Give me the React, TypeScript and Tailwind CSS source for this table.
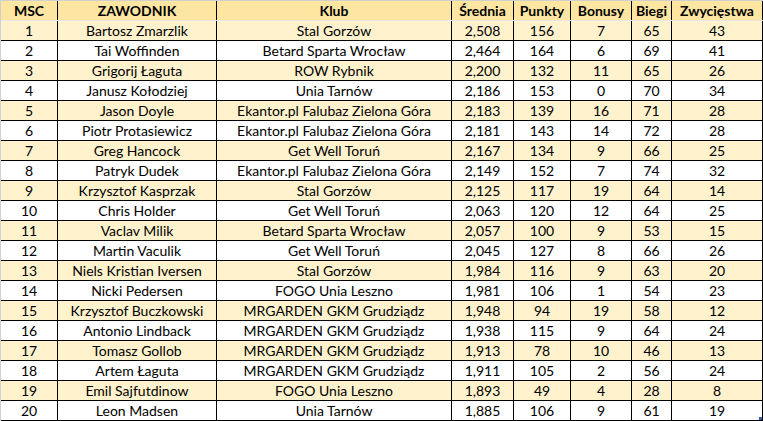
import React from "react";

const rows: (string | number)[][] = [
  [1, "Bartosz Zmarzlik", "Stal Gorzów", "2,508", 156, 7, 65, 43],
  [2, "Tai Woffinden", "Betard Sparta Wrocław", "2,464", 164, 6, 69, 41],
  [3, "Grigorij Łaguta", "ROW Rybnik", "2,200", 132, 11, 65, 26],
  [4, "Janusz Kołodziej", "Unia Tarnów", "2,186", 153, 0, 70, 34],
  [5, "Jason Doyle", "Ekantor.pl Falubaz Zielona Góra", "2,183", 139, 16, 71, 28],
  [6, "Piotr Protasiewicz", "Ekantor.pl Falubaz Zielona Góra", "2,181", 143, 14, 72, 28],
  [7, "Greg Hancock", "Get Well Toruń", "2,167", 134, 9, 66, 25],
  [8, "Patryk Dudek", "Ekantor.pl Falubaz Zielona Góra", "2,149", 152, 7, 74, 32],
  [9, "Krzysztof Kasprzak", "Stal Gorzów", "2,125", 117, 19, 64, 14],
  [10, "Chris Holder", "Get Well Toruń", "2,063", 120, 12, 64, 25],
  [11, "Vaclav Milik", "Betard Sparta Wrocław", "2,057", 100, 9, 53, 15],
  [12, "Martin Vaculik", "Get Well Toruń", "2,045", 127, 8, 66, 26],
  [13, "Niels Kristian Iversen", "Stal Gorzów", "1,984", 116, 9, 63, 20],
  [14, "Nicki Pedersen", "FOGO Unia Leszno", "1,981", 106, 1, 54, 23],
  [15, "Krzysztof Buczkowski", "MRGARDEN GKM Grudziądz", "1,948", 94, 19, 58, 12],
  [16, "Antonio Lindback", "MRGARDEN GKM Grudziądz", "1,938", 115, 9, 64, 24],
  [17, "Tomasz Gollob", "MRGARDEN GKM Grudziądz", "1,913", 78, 10, 46, 13],
  [18, "Artem Łaguta", "MRGARDEN GKM Grudziądz", "1,911", 105, 2, 56, 24],
  [19, "Emil Sajfutdinow", "FOGO Unia Leszno", "1,893", 49, 4, 28, 8],
  [20, "Leon Madsen", "Unia Tarnów", "1,885", 106, 9, 61, 19],
];

const headers = ["MSC", "ZAWODNIK", "Klub", "Średnia", "Punkty", "Bonusy", "Biegi", "Zwycięstwa"];

const cols = "grid grid-cols-[57px_159px_235px_62px_57px_61px_40px_91px]";

export default function App() {
  return (
    <div
      className="relative w-[763px] h-[421px] bg-white border-l border-t border-[#d0d0d0] text-black text-[14px] leading-none"
      style={{ fontFamily: "Lato, 'Liberation Sans', sans-serif" }}
    >
      <div className={`${cols} h-[20px] bg-[#fde6a2] border-b border-[#e6e6e6] font-bold`}>
        {headers.map((h, i) => (
          <div key={i} className="flex items-center justify-center border-r border-black">
            {h}
          </div>
        ))}
      </div>
      {rows.map((r, ri) => (
        <div
          key={ri}
          className={`${cols} h-[20px] border-b border-black ${ri % 2 === 0 ? "bg-[#fff2cc]" : "bg-white"}`}
        >
          {r.map((c, ci) => (
            <div key={ci} className="flex items-center justify-center border-r border-black whitespace-nowrap">
              {c}
            </div>
          ))}
        </div>
      ))}
      <div className="absolute right-[1px] bottom-[1px] w-[3px] h-[3px] bg-[#3a5ea8]" />
    </div>
  );
}
